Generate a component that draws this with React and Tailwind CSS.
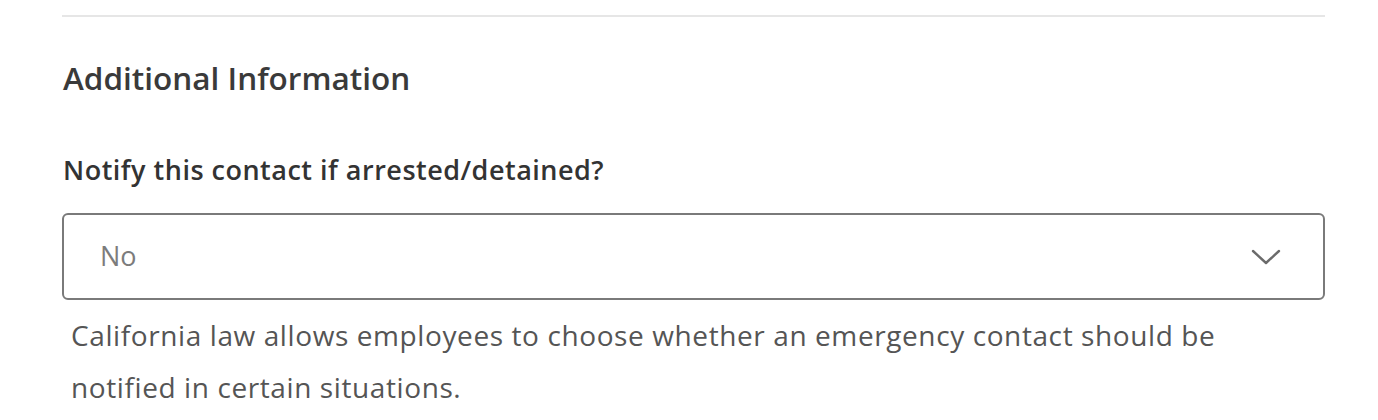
import React from "react";

function ChevronDown() {
  return (
    <svg width="30" height="18" viewBox="0 0 30 18" fill="none">
      <path d="M2 3l13 12L28 3" stroke="#6b6b6b" strokeWidth="2.4" strokeLinecap="round" strokeLinejoin="round" />
    </svg>
  );
}

export default function App() {
  return (
    <div className="w-[1378px] h-[420px] bg-white overflow-hidden font-['Open_Sans',sans-serif]">
      <div className="mx-[62px] w-[1263px] pt-[15px]">
        <div className="border-t-2 border-[#e6e6e6]" />
        <h2 className="mt-[41px] text-[31.5px] leading-[40px] font-semibold text-[#3a3a3a] pl-[1px]">
          Additional Information
        </h2>
        <label className="block mt-[54px] text-[27px] leading-[36px] tracking-[0.5px] font-semibold text-[#333] pl-[1px]">
          Notify this contact if arrested/detained?
        </label>
        <div className="mt-[25px] h-[87px] rounded-[6px] border-2 border-[#7a7a7a] flex items-center justify-between pl-[36px] pr-[42px]">
          <span className="text-[27px] text-[#7c7c7c]">No</span>
          <ChevronDown />
        </div>
        <p className="mt-[9px] pl-[9px] text-[28px] leading-[52px] tracking-[0.6px] text-[#555]">
          California law allows employees to choose whether an emergency contact should be
          <br />
          notified in certain situations.
        </p>
      </div>
    </div>
  );
}
